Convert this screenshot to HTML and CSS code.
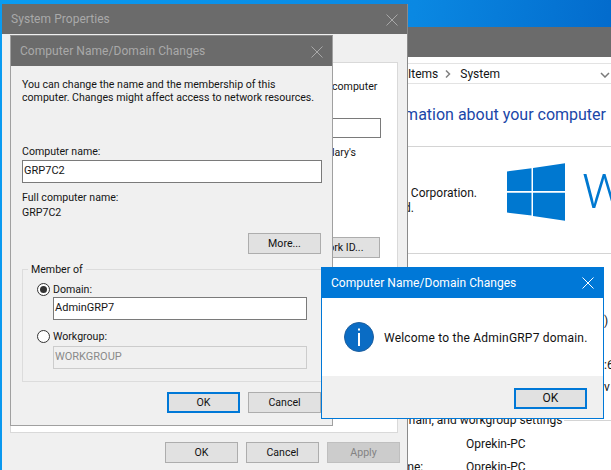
FILE: index.html
```html
<!DOCTYPE html>
<html lang="en">
<head>
<meta charset="utf-8">
<title>Computer Name/Domain Changes</title>
<link rel="stylesheet" href="styles.css">
</head>
<body>
<div class="desktop">
  <section class="win explorer">
    <div class="explorer-title"></div>
    <div class="address"><span class="crumb">Items</span><svg class="chev" width="6" height="8" viewBox="0 0 6 8"><path d="M1 .500l3.500 3.500L1 7.500" fill="none" stroke="#808080" stroke-width="1.500"/></svg><span class="crumb">System</span><svg class="drop" width="10" height="6" viewBox="0 0 10 6"><path d="M1 1l4 4 4-4" fill="none" stroke="#7a7a7a" stroke-width="1.500"/></svg></div>
    <div class="heading"><span>View basic information about your computer</span></div>
    <div class="edition">
      <div class="copyright"><div class="c1">Microsoft Corporation.</div><div class="c2">All rights reserved.</div></div>
      <svg class="winlogo" width="59" height="58" viewBox="0 0 59 58"><path fill="#0078d0" d="M0 8.500L24.500 5.300V28H0zM26 5L58 .3V28H26zM0 29.700H24.500V52.600L0 49.600zM26 29.700H58V57.800L26 53z"/></svg>
      <div class="bigw">W</div>
    </div>
    <div class="rows">
      <div class="row">) <span class="pale">i</span></div>
      <div class="row"></div>
      <div class="row">:6</div>
      <div class="row">v</div>
    </div>
    <div class="section-head"><span>Computer name, domain, and workgroup settings</span><i class="rule"></i></div>
    <div class="kv"><span class="k">Computer name:</span><span>Oprekin-PC</span></div>
    <div class="kv"><span class="k">Full computer name:</span><span>Oprekin-PC</span></div>
  </section>

  <section class="win sysprops">
    <div class="title dim">System Properties<svg class="x" width="12" height="12" viewBox="0 0 12 12"><path d="M.5.500l11 11M11.500.500l-11 11" stroke="#a8a8a8" fill="none"/></svg></div>
    <div class="sys-body">
      <div class="tabpanel">
        <div class="behind b1">computer</div>
        <div class="behind-input"></div>
        <div class="behind b2">lary's</div>
        <button class="btn netid">Network ID...</button>
      </div>
      <div class="actions sys-actions">
        <button class="btn">OK</button>
        <button class="btn">Cancel</button>
        <button class="btn off">Apply</button>
      </div>
    </div>
  </section>

  <section class="win namedlg">
    <div class="title dim">Computer Name/Domain Changes<svg class="x" width="12" height="12" viewBox="0 0 12 12"><path d="M.5.500l11 11M11.500.500l-11 11" stroke="#a8a8a8" fill="none"/></svg></div>
    <div class="dlg-body">
      <p class="intro">You can change the name and the membership of this<br>computer. Changes might affect access to network resources.</p>
      <div class="lbl">Computer name:</div>
      <div class="input wide">GRP7C2</div>
      <div class="lbl full">Full computer name:</div>
      <div class="lbl">GRP7C2</div>
      <div class="more-row"><button class="btn">More...</button></div>
      <fieldset class="member">
        <legend>Member of</legend>
        <div class="radio-row"><span class="radio on"></span>Domain:</div>
        <div class="input sub">AdminGRP7</div>
        <div class="radio-row second"><span class="radio"></span>Workgroup:</div>
        <div class="input sub disabled">WORKGROUP</div>
      </fieldset>
      <div class="actions dlg-actions">
        <button class="btn default">OK</button>
        <button class="btn">Cancel</button>
      </div>
    </div>
  </section>

  <section class="win welcome">
    <div class="title active">Computer Name/Domain Changes<svg class="x" width="12" height="12" viewBox="0 0 12 12"><path d="M.5.500l11 11M11.500.500l-11 11" stroke="#fff" fill="none"/></svg></div>
    <div class="msg">
      <svg width="30" height="30" viewBox="0 0 30 30"><circle cx="15" cy="15" r="14.500" fill="#0a6cc4" stroke="#1f5f9e"/><rect x="14" y="11" width="2" height="13" fill="#fff"/><rect x="14" y="6.500" width="2" height="2" fill="#fff"/></svg>
      <span class="msg-text">Welcome to the AdminGRP7 domain.</span>
    </div>
    <div class="msg-foot"><button class="btn default">OK</button></div>
  </section>
</div>
</body>
</html>
```
FILE: styles.css
```css
* { box-sizing: border-box; }
html, body { margin: 0; padding: 0; }
body { width: 611px; height: 470px; overflow: hidden; }
.desktop {
  position: relative; width: 611px; height: 470px; overflow: hidden;
  background: linear-gradient(100deg, #0a9cf2 0%, #0a88e2 60%, #0060c4 100%);
  font: 12px/15px Roboto, "Liberation Sans", sans-serif;
  color: #151515;
}
.win { position: absolute; }
.title {
  height: 30px; display: flex; align-items: center; justify-content: space-between;
  padding: 0 9px 0 9px; font-size: 12px; letter-spacing: .05px;
}
.title.dim { background: #6b6b6b; color: #a9a9a9; padding-top: 1px; }
.title.active { background: #0078d7; color: #fff; }
.btn {
  width: 73px; height: 21px; padding: 0; background: #e1e1e1; border: 1px solid #adadad;
  font: inherit; color: #111; display: block; white-space: nowrap;
}
.btn.default { border: 2px solid #0078d7; }
.btn.off { background: #cccccc; border-color: #bfbfbf; color: #838383; }

.explorer { left: 300px; top: 27px; width: 311px; height: 443px; background: #fff; }
.explorer-title { height: 30px; background: #6b6b6b; }
.address { height: 21px; margin-top: 6px; border: 1px solid #e3e3e3; border-width: 1px 0; display: flex; align-items: center; padding: 1px 0 0 108px; position: relative; }
.chev { margin: 0 9px 0 7px; }
.drop { position: absolute; right: 1px; top: 8px; }
.heading { height: 63px; padding: 21px 5px 0 0; display: flex; justify-content: flex-end; font-size: 16px; line-height: 20px; color: #1a46a8; border-bottom: 1px solid #d4d4d4; white-space: nowrap; }
.edition { display: flex; height: 107px; padding-top: 16px; border-bottom: 1px solid #d4d4d4; margin-left: 108px; }
.copyright { width: 99px; flex: none; display: flex; flex-direction: column; align-items: flex-end; padding-top: 23px; white-space: nowrap; }
.c1 { margin-right: 30px; }
.c2 { margin-right: 93px; }
.winlogo { flex: none; }
.bigw { font-size: 49px; line-height: 58px; font-weight: 300; color: #0078d0; margin-left: 16px; }
.rows { padding: 56px 0 0 304px; height: 144px; }
.row { height: 22px; line-height: 22px; white-space: nowrap; }
.pale { color: #f1e58a; }
.section-head { display: flex; align-items: center; gap: 2px; margin-top: 15px; height: 15px; white-space: nowrap; }
.rule { flex: 1; height: 1px; background: #d4d4d4; }
.kv { display: flex; height: 23px; align-items: center; padding-left: 14px; white-space: nowrap; }
.section-head + .kv { margin-top: 5px; }
.k { width: 152px; flex: none; }

.sysprops { left: 2px; top: 4px; width: 406px; height: 466px; background: #f0f0f0; border-right: 1px solid #8a8a8a; font-size: 10.600px; }
.sys-body { height: 436px; padding: 28px 9px 0 8px; }
.tabpanel { height: 371px; background: #fff; border: 1px solid #d9d9d9; position: relative; }
.behind { position: absolute; left: 321px; white-space: nowrap; }
.b1 { top: 16px; }
.b2 { top: 82px; }
.behind-input { position: absolute; left: 300px; top: 55px; width: 70px; height: 20px; border: 1px solid #7a7a7a; }
.netid { position: absolute; left: 276px; top: 174px; width: 93px; }
.actions { display: flex; gap: 8px; justify-content: flex-end; }
.sys-actions { padding-top: 9px; margin-right: -2px; }

.namedlg { left: 10px; top: 35px; width: 323px; height: 391px; background: #f0f0f0; border: 1px solid #a0a0a0; border-top-color: #8a8a8a; font-size: 10.600px; }
.dlg-body { padding: 12px 10px 0 11px; }
.intro { margin: 0; height: 66px; line-height: 13px; white-space: nowrap; }
.lbl { line-height: 15px; }
.input { background: #fff; border: 1px solid #7a7a7a; height: 23px; line-height: 19px; padding-left: 1px; }
.input.wide { width: 300px; margin-top: 1px; font-size: 11px; }
.full { margin-top: 7px; }
.more-row { display: flex; justify-content: flex-end; padding: 13px 1px 0 0; }
.member { margin: 8px 0 0 0; padding: 0 0 0 14px; width: 300px; height: 120px; border: 1px solid #dcdcdc; min-width: 0; }
.member legend { padding: 0 3px; margin-left: -9px; line-height: 15px; }
.radio-row { display: flex; align-items: center; gap: 3px; height: 15px; margin-top: 5px; }
.radio-row.second { margin-top: 9px; }
.radio { width: 13px; height: 13px; border-radius: 50%; border: 1px solid #333; background: #fff; flex: none; position: relative; }
.radio.on::after { content: ""; position: absolute; left: 2px; top: 2px; width: 7px; height: 7px; border-radius: 50%; background: #333; }
.input.sub { width: 254px; margin: 0 0 0 16px; font-size: 11px; }
.radio-row.second + .input { margin-top: 2px; }
.input.disabled { background: #f0f0f0; border-color: #ccc; color: #8a8a8a; }
.dlg-actions { padding: 10px 1px 0 0; }

.welcome { left: 321px; top: 267px; width: 283px; height: 152px; background: #fff; border: 1px solid #0078d7; }
.msg { height: 78px; display: flex; align-items: center; gap: 10px; padding: 0 0 0 22px; font-size: 12px; letter-spacing: .2px; color: #111; }
.msg-text { padding-top: 2px; }
.msg-foot { height: 42px; background: #f0f0f0; display: flex; justify-content: flex-end; padding: 12px 16px 0 0; }
```
